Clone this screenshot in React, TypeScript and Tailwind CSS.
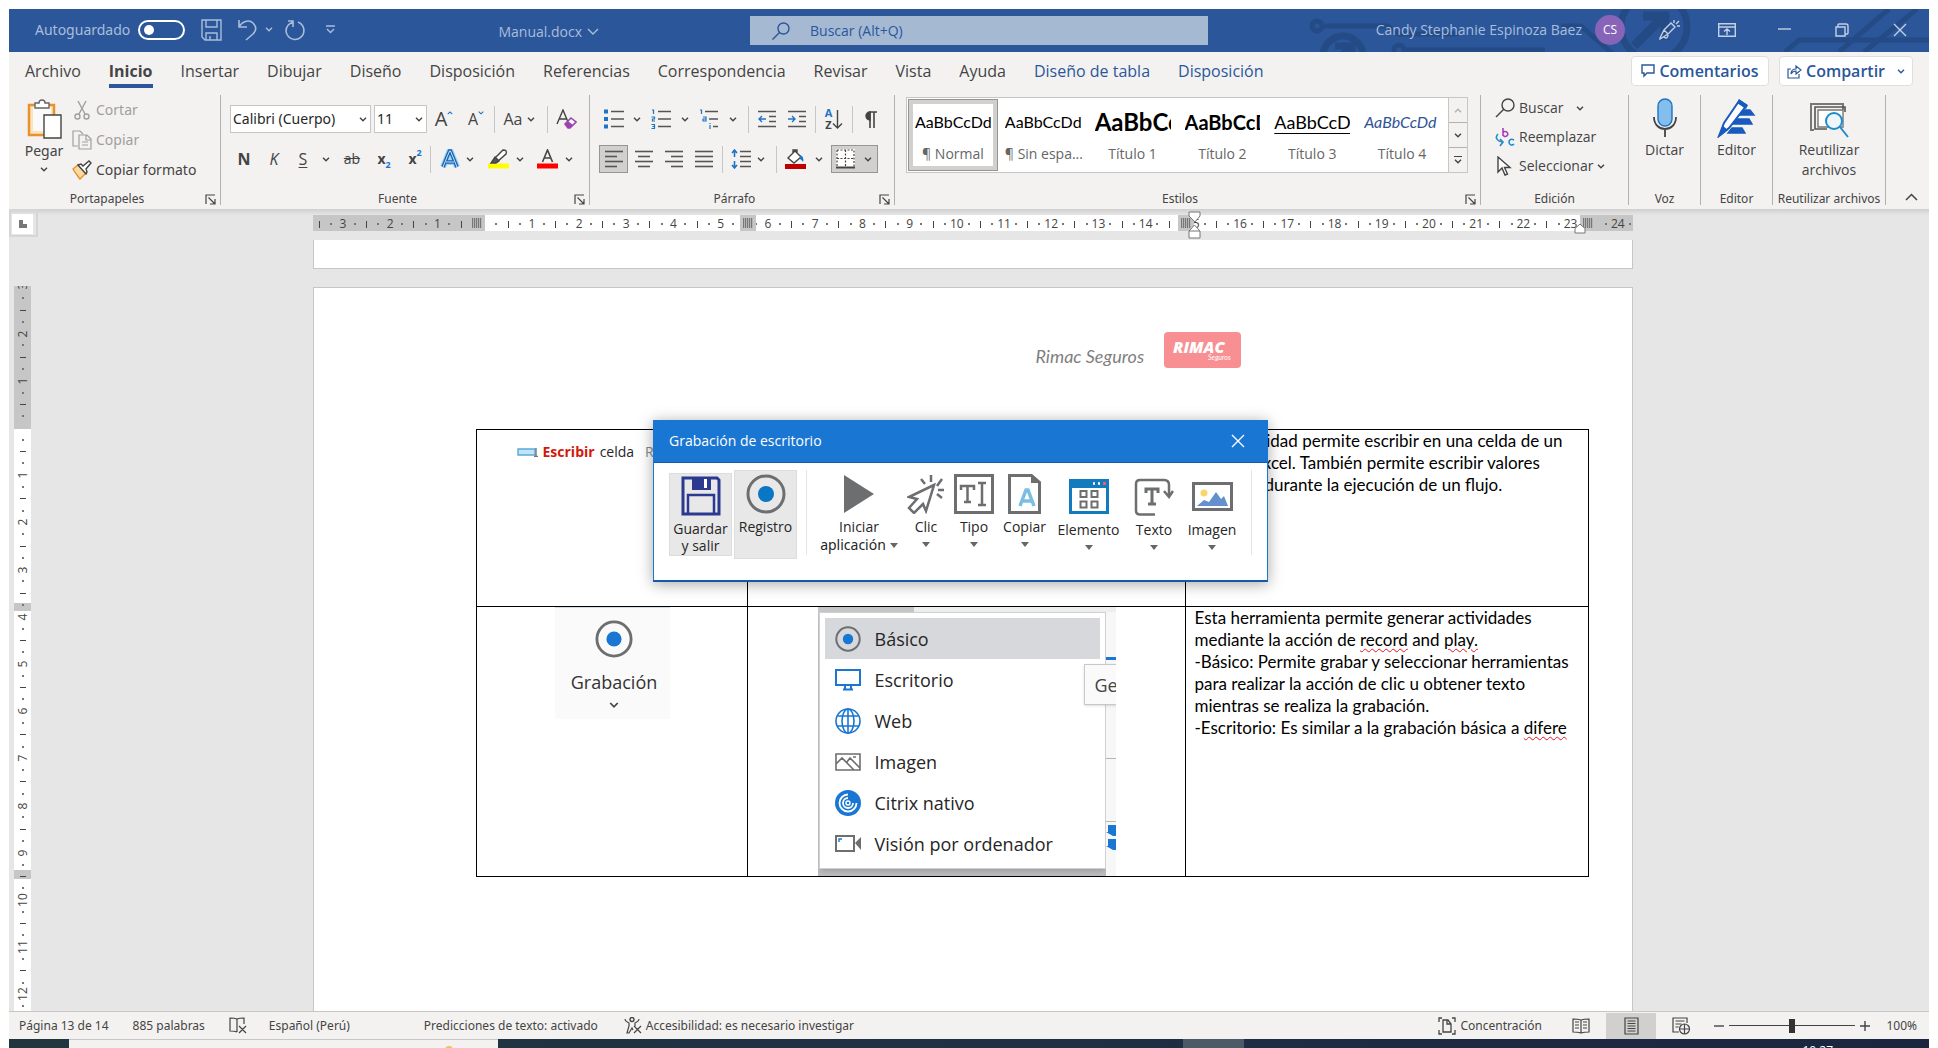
import React from "react";

type Kids = { children?: React.ReactNode };

const Chev = ({ c = "#444444", w = 8 }: { c?: string; w?: number }) => (
  <svg width={w} height={w * 0.625} viewBox="0 0 8 5" fill="none" stroke={c} strokeWidth="1.4" className="shrink-0" aria-hidden="true">
    <path d="M1 .8 4 3.8 7 .8" />
  </svg>
);

const Svg = ({ w = 20, h = 20, vb, children }: Kids & { w?: number; h?: number; vb?: string }) => (
  <svg width={w} height={h} viewBox={vb ?? `0 0 ${w} ${h}`} fill="none" stroke="#444444" strokeWidth="1.4" className="shrink-0" aria-hidden="true">
    {children}
  </svg>
);

const Btn = ({ label, cls = "w-7", children }: Kids & { label: string; cls?: string }) => (
  <button type="button" aria-label={label} className={`flex h-7 shrink-0 items-center justify-center ${cls}`}>
    {children}
  </button>
);

const Drop = ({ label, cls = "w-4" }: { label: string; cls?: string }) => (
  <Btn label={label} cls={cls}>
    <Chev />
  </Btn>
);

const Rule = ({ cls = "mx-1" }: { cls?: string }) => <span className={`h-[27px] w-px shrink-0 bg-[#c8c6c4] ${cls}`} />;

function Group({ name, cls, launcher, children }: Kids & { name: string; cls: string; launcher?: boolean }) {
  return (
    <section aria-label={name} className={`flex h-[110px] flex-col border-r border-[#b3b1af] ${cls}`}>
      <div className="flex-1">{children}</div>
      <div className="flex h-3 items-center">
        <h2 className="flex-1 text-center font-['Noto_Sans',sans-serif] text-xs leading-3 whitespace-nowrap text-[#444444]">{name}</h2>
        {launcher && (
          <button type="button" aria-label={`Opciones de ${name}`} className="mr-1">
            <Svg w={11} h={11}>
              <path d="M1 10V1h9M3.5 3.5l6 6M10 5v5H5" strokeWidth="1.2" />
            </Svg>
          </button>
        )}
      </div>
    </section>
  );
}

/* ---------- Title bar ---------- */

function TitleBar() {
  return (
    <header className="relative grid h-[43px] shrink-0 grid-cols-[741fr_458fr_721fr] items-center overflow-hidden bg-[#2b579a] text-sm text-[#a9bddb]">
      <svg className="absolute top-0 right-0" width="630" height="43" viewBox="0 0 630 43" fill="none" stroke="#254b87" strokeWidth="5" aria-hidden="true">
        <circle cx="18" cy="17" r="5" />
        <path d="M24 17h65l10 8h60" />
        <circle cx="44" cy="47" r="20" strokeWidth="7" />
        <path d="m34 55 18-18M36 37h17v16" strokeWidth="7" />
        <circle cx="100" cy="41" r="5" />
        <path d="M106 41h140M262 17h20l32 28" />
        <circle cx="355" cy="18" r="33" strokeWidth="7" />
        <path d="m335 37 30-30M344 7h22v24" strokeWidth="9" />
        <path d="M486 43 500 31h130M540 43 590 0M565 43 618 0" />
      </svg>
      <div className="relative flex h-full items-center pb-0.5 pl-[26px]">
        <label className="flex items-center gap-2">
          <span className="font-['Noto_Sans',sans-serif]">Autoguardado</span>
          <input
            type="checkbox"
            className="h-5 w-[47px] appearance-none rounded-full border-2 border-white before:mt-[3px] before:ml-1 before:block before:size-[10px] before:rounded-full before:bg-white"
          />
        </label>
        <button type="button" aria-label="Guardar" className="ml-4">
          <Svg w={21} h={22}>
            <path d="M1 1h19v20H4l-3-3zM5 1v7h11V1M5 21v-7h11v7M9 21v-4" stroke="#a9bddb" />
          </Svg>
        </button>
        <button type="button" aria-label="Deshacer" className="ml-4">
          <Svg w={19} h={22}>
            <path d="M1 1v7h8M1 8C5 1 12 1 15 4c4 4 3 8 0 11l-7 6" stroke="#a9bddb" strokeWidth="1.6" />
          </Svg>
        </button>
        <button type="button" aria-label="Opciones de deshacer" className="ml-2">
          <Chev c="#a9bddb" />
        </button>
        <button type="button" aria-label="Rehacer" className="ml-3">
          <Svg w={21} h={22}>
            <path d="M3 2h5v6M8 3C3 5 1 8 1 12a9 9 0 1 0 12-9" stroke="#a9bddb" strokeWidth="1.6" />
          </Svg>
        </button>
        <button type="button" aria-label="Personalizar barra" className="ml-5">
          <Svg w={9} h={9}>
            <path d="M0 1h9M1 4l3.500 3.500L8 4" stroke="#a9bddb" />
          </Svg>
        </button>
        <button type="button" className="mr-[151px] ml-auto flex items-center gap-[5px] pt-1">
          Manual.docx{" "}
          <svg width="12" height="8" viewBox="0 0 12 8" fill="none" stroke="#a9bddb" strokeWidth="1.4" aria-hidden="true">
            <path d="m1 1 5 5 5-5" />
          </svg>
        </button>
      </div>
      <label className="relative flex h-[29px] items-center gap-5 bg-[#a5b9d3] pl-[22px]">
        <Svg w={18} h={18}>
          <circle cx="11.500" cy="6.500" r="5.500" stroke="#2b579a" />
          <path d="m7.500 10.500-7 7" stroke="#2b579a" />
        </Svg>
        <input aria-label="Buscar" placeholder="Buscar (Alt+Q)" className="w-full bg-transparent outline-none placeholder:text-[#2b579a]" />
      </label>
      <div className="relative flex h-full items-center justify-end pr-[22px] pb-0.5">
        <span>Candy Stephanie Espinoza Baez</span>
        <span className="mr-[34px] ml-[13px] flex size-[30px] items-center justify-center rounded-full bg-[#8764b8] text-xs text-white">CS</span>
        <button type="button" aria-label="Novedades">
          <Svg w={21} h={20}>
            <path d="m1 18 4-8 7-7 4 4-7 7-8 5zM5 10l4 4M5 17c2 2 4 1 4-2M15 3V0M17 4l3-3M18 6h3" stroke="#c3d0e5" />
          </Svg>
        </button>
        <button type="button" aria-label="Opciones de la cinta" className="ml-[38px]">
          <Svg w={18} h={14}>
            <path d="M.7.7h16.600v12.600H.7zM.7 4h16.600M9 12V6M6 8.500 9 6l3 2.500" stroke="#c3d0e5" />
          </Svg>
        </button>
        <button type="button" aria-label="Minimizar" className="ml-[42px]">
          <Svg w={13} h={14}>
            <path d="M0 6h13" stroke="#c3d0e5" />
          </Svg>
        </button>
        <button type="button" aria-label="Restaurar" className="ml-11">
          <Svg w={14} h={14}>
            <path d="M1 4h9v9H1zM3 4V2q0-1 1-1h7q2 0 2 2v7q0 1-1 1h-2" stroke="#c3d0e5" />
          </Svg>
        </button>
        <button type="button" aria-label="Cerrar" className="ml-11">
          <Svg w={14} h={14}>
            <path d="m1 1 12 12M13 1 1 13" stroke="#c3d0e5" />
          </Svg>
        </button>
      </div>
    </header>
  );
}

/* ---------- Tabs ---------- */

const TABS = ["Archivo", "Inicio", "Insertar", "Dibujar", "Diseño", "Disposición", "Referencias", "Correspondencia", "Revisar", "Vista", "Ayuda"];

function Tabs() {
  return (
    <nav className="flex h-[43px] shrink-0 items-start pr-4 pl-4 text-base text-[#444444]">
      <div className="flex gap-7">
        {TABS.map((t) => (
          <button
            key={t}
            type="button"
            className={t === "Inicio" ? "h-9 border-b-4 border-[#2b579a] pt-[5px] leading-7 font-bold" : "h-9 border-b-4 border-transparent pt-[5px] leading-7"}
          >
            {t}
          </button>
        ))}
        <button type="button" className="h-9 border-b-4 border-transparent pt-[5px] leading-7 text-[#2b579a]">Diseño de tabla</button>
        <button type="button" className="h-9 border-b-4 border-transparent pt-[5px] leading-7 text-[#2b579a]">Disposición</button>
      </div>
      <div className="mt-1 ml-auto flex gap-[10px] font-semibold text-[#2b579a]">
        <button type="button" className="flex h-[30px] w-[138px] items-center justify-center gap-1 rounded-sm border border-[#e1dfdd] bg-white">
          <Svg w={14} h={14}>
            <path d="M1 1h12v8H6l-3 3V9H1z" stroke="#2b579a" />
          </Svg>
          Comentarios
        </button>
        <button type="button" className="flex h-[30px] w-[134px] items-center justify-center gap-1 rounded-sm border border-[#e1dfdd] bg-white">
          <Svg w={15} h={15}>
            <path d="M4 5H1v9h11v-4M4 10c0-4 3-5 5-5V2l5 4-5 4V7C7 7 5 8 4 10z" stroke="#2b579a" strokeWidth="1.200" />
          </Svg>
          <span className="mr-2">Compartir</span>
          <Chev c="#2b579a" />
        </button>
      </div>
    </nav>
  );
}

/* ---------- Ribbon ---------- */

const Lines = ({ rows }: { rows: number[][] }) => (
  <Svg w={18} h={18}>
    {rows.map(([a, b], i) => (
      <path key={i} d={`M${a} ${i * 5 + 1.5}H${b}`} stroke="#555555" strokeWidth="1.6" />
    ))}
  </Svg>
);

function Clipboard() {
  return (
    <Group name="Portapapeles" cls="w-[212px]" launcher>
      <div className="flex gap-2 pl-[15px] font-['Noto_Sans',sans-serif] text-sm">
        <button type="button" className="flex w-10 flex-col items-center pt-1 text-[#444444]">
          <Svg w={35} h={40}>
            <path d="M2 6h25v30H2z" fill="#fbe3bd" stroke="#e8912d" strokeWidth="2.500" />
            <path d="M6 8h18v24H6z" fill="#fafafa" stroke="none" />
            <path d="M8 4h4c0-4 6-4 6 0h4v5H8z" fill="#fff" stroke="#666" />
            <path d="M17 16h17v23H17z" fill="#fff" />
          </Svg>
          <span className="leading-6">Pegar</span>
          <span className="mt-1"><Chev /></span>
        </button>
        <div className="flex flex-col text-[#a19f9d]">
          <button type="button" className="flex h-[30px] items-center gap-1">
            <Svg w={20} h={20}>
              <path d="m6 1 7 13M14 1 7 14" stroke="#a19f9d" />
              <circle cx="5.500" cy="16.500" r="2.500" stroke="#a19f9d" />
              <circle cx="14.500" cy="16.500" r="2.500" stroke="#a19f9d" />
            </Svg>
            Cortar
          </button>
          <button type="button" className="flex h-[30px] items-center gap-1">
            <Svg w={20} h={20}>
              <path d="M6 16H1V1h7l3 3M7 5h8l4 4v10H7zM14 5v5h5M10 12h6M10 15h6" stroke="#a19f9d" strokeWidth="1.200" />
            </Svg>
            Copiar
          </button>
          <button type="button" className="flex h-[30px] items-center gap-1 text-[#444444]">
            <Svg w={20} h={20}>
              <path d="M1 9 6 5l8 8-6 6C6 16 3 13 1 9z" fill="#fbd9a3" stroke="#e8912d" />
              <path d="m6 5 3-1 2 2 6-5 2 2-5 6 1 3-1 2z" fill="#fff" />
            </Svg>
            Copiar formato
          </button>
        </div>
      </div>
    </Group>
  );
}

function FontGroup() {
  return (
    <Group name="Fuente" cls="w-[369px]" launcher>
      <div className="flex flex-col gap-3 pt-[10px] pl-[9px] text-[#444444]">
        <div className="flex items-center">
          <label className="relative mr-[3px] flex items-center">
            <select aria-label="Fuente" className="h-7 w-[141px] appearance-none border border-[#c8c6c4] bg-white pl-0.5 font-['Noto_Sans',sans-serif] text-sm text-[#262626]">
              <option>Calibri (Cuerpo)</option>
            </select>
            <span className="pointer-events-none absolute right-1"><Chev /></span>
          </label>
          <label className="relative flex items-center">
            <select aria-label="Tamaño de fuente" className="h-7 w-[53px] appearance-none border border-[#c8c6c4] bg-white pl-0.5 font-['Noto_Sans',sans-serif] text-sm text-[#262626]">
              <option>11</option>
            </select>
            <span className="pointer-events-none absolute right-1"><Chev /></span>
          </label>
          <Btn label="Aumentar tamaño" cls="ml-[3px] w-7">
            <span className="text-xl">A</span>
            <span className="mb-3 rotate-180"><Chev c="#1e74c4" w={6} /></span>
          </Btn>
          <Btn label="Disminuir tamaño" cls="ml-1 w-7">
            <span className="text-base">A</span>
            <span className="mb-3"><Chev c="#1e74c4" w={6} /></span>
          </Btn>
          <Rule cls="mx-1" />
          <Btn label="Cambiar mayúsculas" cls="w-10 gap-1">
            <span className="text-base">Aa</span>
            <Chev />
          </Btn>
          <Rule cls="ml-2 mr-1" />
          <Btn label="Borrar formato">
            <Svg w={21} h={20}>
              <path d="M1 15 7 1l5 12M3 10h8" />
              <path d="m9 15 6-6 5 4-6 6h-2z" fill="#fff" stroke="#9b44b0" strokeWidth="1.600" />
              <path d="m9 15 3-3 5 4-3 3h-2z" fill="#9b44b0" stroke="none" />
            </Svg>
          </Btn>
        </div>
        <div className="flex items-center">
          <Btn label="Negrita"><b className="text-base">N</b></Btn>
          <Btn label="Cursiva" cls="w-8"><i className="text-base">K</i></Btn>
          <Btn label="Subrayado" cls="w-[26px]"><u className="text-base underline-offset-2">S</u></Btn>
          <Drop label="Opciones de subrayado" cls="w-5" />
          <Btn label="Tachado" cls="w-8"><s className="text-sm">ab</s></Btn>
          <Btn label="Subíndice" cls="w-8"><b className="text-sm">x</b><b className="mt-3 text-[9px] text-[#1e74c4]">2</b></Btn>
          <Btn label="Superíndice" cls="w-[30px]"><b className="text-sm">x</b><b className="mb-3 text-[9px] text-[#1e74c4]">2</b></Btn>
          <Rule cls="mr-[5px]" />
          <Btn label="Efectos de texto">
            <Svg w={22} h={20}>
              <path d="m4 18 6.500-16h1L18 18M7 13h8" stroke="#9fd0f5" strokeWidth="6" />
              <path d="m4 18 6.500-16h1L18 18M7 13h8" stroke="#1565b5" strokeWidth="3.500" />
              <path d="m4 18 6.500-16h1L18 18M7 13h8" stroke="#fff" strokeWidth=".8" />
            </Svg>
          </Btn>
          <Drop label="Opciones de efectos" cls="w-3" />
          <Btn label="Resaltado" cls="ml-[6px] w-8">
            <Svg w={21} h={20}>
              <path d="M0 14.500h21v5H0z" fill="#ffff00" stroke="none" />
              <path d="m7 9 8-8c3 0 4 1 3 4l-8 7z" fill="#fff" />
              <path d="m7 8 4 4-3 2H3z" fill="#555" />
            </Svg>
          </Btn>
          <Drop label="Colores de resaltado" cls="w-3" />
          <Btn label="Color de fuente" cls="ml-[5px] w-8">
            <Svg w={21} h={20}>
              <path d="M0 14.500h21v5H0z" fill="#ff0000" stroke="none" />
              <path d="m5.500 13 5-12 5 12M7 9h7" strokeWidth="1.600" />
            </Svg>
          </Btn>
          <Drop label="Colores de fuente" cls="w-3" />
        </div>
      </div>
    </Group>
  );
}

function Paragraph() {
  return (
    <Group name="Párrafo" cls="w-[305px]" launcher>
      <div className="flex flex-col gap-3 pt-[10px] pl-[9px]">
        <div className="flex items-center">
          <Btn label="Viñetas" cls="w-[30px]">
            <Svg>
              <path d="M7 2.500h13M7 10h13M7 17.500h13" stroke="#555" />
              <path d="M0 .5h4v4H0zM0 8h4v4H0zM0 15.500h4v4H0z" fill="#1e74c4" stroke="none" />
            </Svg>
          </Btn>
          <Drop label="Opciones de viñetas" />
          <Btn label="Numeración" cls="w-8">
            <Svg>
              <path d="M7 2.500h13M7 10h13M7 17.500h13" stroke="#555" />
              <path d="M1 1h1.500v4M.5 8h3v2h-2v2h2.500M.5 15.500h3v4h-3M1.500 17.500h2" stroke="#1e74c4" strokeWidth="1.200" />
            </Svg>
          </Btn>
          <Drop label="Opciones de numeración" />
          <Btn label="Lista multinivel" cls="w-8">
            <Svg>
              <path d="M6 2.500h13M10 10h9M14 17.500h5" stroke="#555" />
              <path d="M1 1h1.500v4M4 8h3v4H4v-2h3M11 14v1M11 16v4" stroke="#1e74c4" strokeWidth="1.200" />
            </Svg>
          </Btn>
          <Drop label="Opciones de lista" />
          <Rule cls="ml-[7px] mr-[3px]" />
          <Btn label="Disminuir sangría" cls="w-[30px]">
            <Svg w={18} h={18}>
              <path d="M0 1.500h18M11 6.500h7M11 11.500h7M0 16.500h18" stroke="#555" />
              <path d="M8 9H1M4 6 1 9l3 3" stroke="#1e74c4" />
            </Svg>
          </Btn>
          <Btn label="Aumentar sangría" cls="w-[30px]">
            <Svg w={18} h={18}>
              <path d="M0 1.500h18M11 6.500h7M11 11.500h7M0 16.500h18" stroke="#555" />
              <path d="M0 9h7M4 6l3 3-3 3" stroke="#1e74c4" />
            </Svg>
          </Btn>
          <Rule cls="mx-[3px]" />
          <Btn label="Ordenar" cls="w-[30px]">
            <span className="flex flex-col text-[11px] leading-3 font-bold text-[#444444]">
              <span className="text-[#1e74c4]">A</span>
              <span>Z</span>
            </span>
            <Svg w={11} h={20}>
              <path d="M5.500 1v18M1 14.500 5.500 19l4.500-4.500" />
            </Svg>
          </Btn>
          <Rule cls="mx-[3px]" />
          <Btn label="Mostrar todo">
            <Svg w={14} h={17}>
              <path d="M7 1a4 4 0 0 0 0 8z" fill="#444" />
              <path d="M7 17V1h7M11 1v16" strokeWidth="1.600" />
            </Svg>
          </Btn>
        </div>
        <div className="flex items-center">
          <Btn label="Alinear a la izquierda" cls="w-[29px] border border-[#979593] bg-[#d2d0ce]"><Lines rows={[[0, 18], [0, 12], [0, 18], [0, 12]]} /></Btn>
          <Btn label="Centrar" cls="w-[31px]"><Lines rows={[[0, 18], [3, 15], [0, 18], [3, 15]]} /></Btn>
          <Btn label="Alinear a la derecha" cls="w-[30px]"><Lines rows={[[0, 18], [6, 18], [0, 18], [6, 18]]} /></Btn>
          <Btn label="Justificar" cls="w-[30px]"><Lines rows={[[0, 18], [0, 18], [0, 18], [0, 18]]} /></Btn>
          <Rule cls="ml-[3px] mr-1" />
          <Btn label="Interlineado">
            <Svg>
              <path d="M9 2.500h11M9 7.500h11M9 12.500h11M9 17.500h11" stroke="#555" />
              <path d="M3.500 1v7M1 4l2.500-3L6 4M3.500 19v-7M1 16l2.500 3L6 16" stroke="#1e74c4" strokeWidth="1.600" />
            </Svg>
          </Btn>
          <Drop label="Opciones de interlineado" cls="w-3" />
          <Rule cls="ml-[9px] mr-1" />
          <Btn label="Sombreado">
            <Svg w={21} h={20}>
              <path d="M0 15h21v5H0z" fill="#c00000" stroke="none" />
              <path d="m3 9 7-7 6 6-7 6zM8 4V1h4v4" fill="#fff" />
              <path d="M15 6c3 1 4 4 3 7-1-2-2-2-3-3z" fill="#1e74c4" stroke="none" />
            </Svg>
          </Btn>
          <Drop label="Colores de sombreado" cls="w-5" />
          <span className="ml-0.5 flex border border-[#979593] bg-[#d2d0ce]">
            <Btn label="Bordes" cls="-my-px w-[27px]">
              <Svg w={19} h={20}>
                <path d="M0 0h19v18H0z" fill="#fff" stroke="none" />
                <path d="M1 1h17v17M1 1v17M9.500 1v17M1 9.500h17" strokeDasharray="2 1.500" strokeWidth="1.200" />
                <path d="M0 18.500h19" strokeWidth="2" />
              </Svg>
            </Btn>
            <Btn label="Opciones de bordes" cls="-my-px w-[18px]"><Chev /></Btn>
          </span>
        </div>
      </div>
    </Group>
  );
}

const STYLES = [
  { n: "¶ Normal", s: "AaBbCcDd", c: "text-base text-black" },
  { n: "¶ Sin espa...", s: "AaBbCcDd", c: "text-base text-black" },
  { n: "Título 1", s: "AaBbCcDd", c: "text-2xl font-bold text-black" },
  { n: "Título 2", s: "AaBbCcDd", c: "text-xl font-bold text-black" },
  { n: "Título 3", s: "AaBbCcD", c: "text-lg text-black underline underline-offset-4" },
  { n: "Título 4", s: "AaBbCcDd", c: "text-base italic text-[#2f5496]" },
];

function Styles() {
  return (
    <Group name="Estilos" cls="min-w-0 flex-1" launcher>
      <div className="mt-0.5 mr-3 ml-[11px] flex h-[76px] border border-[#c8c6c4] bg-white">
        <div className="grid min-w-0 flex-1 grid-cols-6 p-px">
          {STYLES.map((s, i) => (
            <button
              key={s.n}
              type="button"
              className={i === 0 ? "min-w-0 border border-[#979593] bg-white px-[6px] ring-4 ring-[#d2d0ce] ring-inset" : "min-w-0 border border-transparent px-[6px]"}
            >
              <span className={`block h-8 overflow-hidden text-left font-[Lato,sans-serif] leading-8 whitespace-nowrap ${s.c}`}>{s.s}</span>
              <span className="block pt-1.5 text-sm whitespace-nowrap text-[#666666]">{s.n}</span>
            </button>
          ))}
        </div>
        <div className="flex w-[19px] flex-col divide-y divide-[#b3b1af] border-l border-[#c8c6c4] bg-[#f3f2f1]">
          <button type="button" aria-label="Estilos anteriores" className="flex flex-1 items-center justify-center">
            <span className="rotate-180"><Chev c="#b3b1af" /></span>
          </button>
          <button type="button" aria-label="Estilos siguientes" className="flex flex-1 items-center justify-center"><Chev /></button>
          <button type="button" aria-label="Más estilos" className="flex flex-1 flex-col items-center justify-center gap-0.5">
            <span className="h-px w-2 bg-[#444444]" />
            <Chev />
          </button>
        </div>
      </div>
    </Group>
  );
}

function RightGroups() {
  return (
    <>
      <Group name="Edición" cls="w-[148px] shrink-0">
        <div className="flex flex-col pl-[14px] text-sm text-[#444444]">
          <button type="button" className="flex h-[26px] items-center gap-1">
            <Svg><circle cx="13" cy="7" r="6" /><path d="m9 11-8 8" /></Svg>
            Buscar <span className="ml-2"><Chev /></span>
          </button>
          <button type="button" className="flex h-8 items-center gap-1">
            <Svg>
              <path d="M8 1v8M8 6a2.500 2.500 0 1 1 0 2" stroke="#a83fb8" strokeWidth="1.600" />
              <path d="M19 13c-4-2-5 1-5 2 0 3 3 4 5 2M3 7c-3 3-2 7 5 8M5 12l3 3-3 4" stroke="#1e8bcd" strokeWidth="1.600" />
            </Svg>
            Reemplazar
          </button>
          <button type="button" className="flex h-[26px] items-center gap-1">
            <Svg><path d="M3 1v15l4-4 3 7 2.500-1-3-6.500H15z" fill="#fff" /></Svg>
            Seleccionar <Chev />
          </button>
        </div>
      </Group>
      <Group name="Voz" cls="w-[72px] shrink-0">
        <button type="button" className="flex w-full flex-col items-center pt-[3px] text-sm text-[#444444]">
          <Svg w={26} h={40}>
            <rect x="6" y="1" width="14" height="27" rx="7" fill="#83beec" stroke="#1e74c4" />
            <path d="M2 19c0 16 22 16 22 0M13 31v8" strokeWidth="1.800" />
          </Svg>
          <span className="leading-6">Dictar</span>
        </button>
      </Group>
      <Group name="Editor" cls="w-[72px] shrink-0">
        <button type="button" className="flex w-full flex-col items-center pt-[3px] text-sm text-[#444444]">
          <Svg w={40} h={40}>
            <path d="M22 12h11l4 5H20zM20 21h12l3 5H16zM15 30h10l3 5H11z" fill="#185abd" stroke="#185abd" />
            <path d="M22 3 7 25 2 38l10-8L29 8z" fill="#fff" stroke="#185abd" strokeWidth="2" />
            <path d="m22 1 9 6-2 4-9-6zM6 28l5 4-9 7z" fill="#185abd" stroke="none" />
          </Svg>
          <span className="leading-6">Editor</span>
        </button>
      </Group>
      <Group name="Reutilizar archivos" cls="w-[113px] shrink-0">
        <button type="button" className="flex w-full flex-col items-center pt-[3px] text-sm text-[#444444]">
          <Svg w={40} h={40}>
            <path d="M34 12V6H2v26h3" stroke="#777" strokeWidth="2" />
            <path d="M36 14V9H6v22h12" stroke="#555" strokeWidth="1.600" />
            <path d="M9 12h25v17H9z" fill="#fff" stroke="#777" />
            <circle cx="25" cy="23" r="8" fill="#eef6fc" stroke="#1e8bcd" strokeWidth="2" />
            <path d="m31 29 8 10" stroke="#1e8bcd" strokeWidth="2" />
          </Svg>
          <span className="leading-6">Reutilizar</span>
          <span className="leading-4">archivos</span>
        </button>
      </Group>
      <button type="button" aria-label="Contraer la cinta" className="flex h-[110px] w-[43px] shrink-0 items-end justify-center pr-0 pb-1 pl-2">
        <svg width="13" height="8" viewBox="0 0 13 8" fill="none" stroke="#444444" strokeWidth="1.5" aria-hidden="true">
          <path d="m1 7 5.500-5.500L12 7" />
        </svg>
      </button>
    </>
  );
}

/* ---------- Rulers ---------- */

const H_MARKS = Array.from({ length: 28 }, (_, i) => Math.abs(i - 3));
const V_MARKS = Array.from({ length: 16 }, (_, i) => Math.abs(i - 3));

const Grip = ({ cls }: { cls: string }) => (
  <span className={`absolute inset-y-0 w-4 bg-[#c6c6c6] px-[3px] py-[3px] ${cls}`}>
    <span className="block h-full w-full bg-[repeating-linear-gradient(90deg,#777_0_1px,#b5b5b5_1px_2px)]" />
  </span>
);

function HorizontalRuler() {
  return (
    <div className="relative mx-auto mt-[6px] h-4 w-[1320px] bg-white text-xs leading-4 text-[#444444]">
      <div className="absolute inset-0 overflow-hidden">
        <span className="absolute inset-y-0 left-0 w-[172px] bg-[#c6c6c6]" />
        <span className="absolute inset-y-0 right-0 w-[50px] bg-[#c6c6c6]" />
        <div className="relative -mr-[3px] ml-px grid grid-cols-28 pt-px">
          {H_MARKS.map((n, i) => (
            <span key={i} className="grid grid-cols-4 items-center justify-items-center">
              <span className="h-[7px] w-px bg-[#444444]" />
              <span className="size-[2px] bg-[#777777]" />
              <span className="flex w-4 justify-center">{n || ""}</span>
              <span className="size-[2px] bg-[#777777]" />
            </span>
          ))}
        </div>
        <Grip cls="left-[156px]" />
        <Grip cls="left-[427px]" />
        <Grip cls="left-[865px]" />
        <Grip cls="left-[1267px]" />
      </div>
      <svg className="absolute -top-1 left-[875px]" width="13" height="28" viewBox="0 0 13 28" fill="#fff" stroke="#777" aria-hidden="true">
        <path d="M1 1h11v4l-5 6-6-6zM1 20l5.500-6L12 20v7H1zM1 20h11" />
      </svg>
      <svg className="absolute top-2 left-[1261px]" width="12" height="11" viewBox="0 0 12 11" fill="#fff" stroke="#777" aria-hidden="true">
        <path d="M1 5.500 6 1l5 4.500V10H1z" />
      </svg>
    </div>
  );
}

function VerticalRuler() {
  return (
    <div className="relative mt-[49px] ml-[5px] min-h-0 w-[17px] flex-1 overflow-hidden bg-white text-xs text-[#444444]">
      <span className="absolute top-0 left-0 h-[143px] w-full bg-[#c6c6c6]" />
      <span className="absolute top-[317px] left-0 h-2 w-full bg-[#c6c6c6]" />
      <span className="absolute top-[584px] left-0 h-[9px] w-full bg-[#c6c6c6]" />
      <div className="relative -mt-[29px] grid h-[755px] grid-rows-16">
        {V_MARKS.map((n, i) => (
          <span key={i} className="grid grid-rows-4 items-center justify-items-center">
            <span className="h-px w-[6px] bg-[#444444]" />
            <span className="size-[2px] bg-[#777777]" />
            <span className="flex h-2 w-4 -rotate-90 items-center justify-center leading-3">{n || ""}</span>
            <span className="size-[2px] bg-[#777777]" />
          </span>
        ))}
      </div>
    </div>
  );
}

/* ---------- Document ---------- */

const Record = ({ s, dot = "#1976d2" }: { s: number; dot?: string }) => (
  <Svg w={s} h={s} vb="0 0 40 40">
    <circle cx="20" cy="20" r="18" stroke="#6d6e70" strokeWidth="3" />
    <circle cx="20" cy="20" r="8" fill={dot} stroke="none" />
  </Svg>
);

const MENU: { n: string; i: React.ReactNode }[] = [
  { n: "Básico", i: <Record s={26} /> },
  {
    n: "Escritorio",
    i: <Svg w={26} h={22}><path d="M1 1h24v15H1zM10 17v3M16 17v3M8 20.500h10" stroke="#1976d2" strokeWidth="2" /></Svg>,
  },
  {
    n: "Web",
    i: <Svg w={26} h={26}><g stroke="#1976d2" strokeWidth="1.600"><circle cx="13" cy="13" r="12" /><ellipse cx="13" cy="13" rx="6" ry="12" /><path d="M13 1v24M2.500 8h21M2.500 18h21" /></g></Svg>,
  },
  {
    n: "Imagen",
    i: <Svg w={26} h={18}><path d="M1 1h24v16H1zM1 11l6-6 12 12M12 9l3-4 10 10M18 4h3" stroke="#6d6e70" strokeWidth="1.600" /></Svg>,
  },
  {
    n: "Citrix nativo",
    i: (
      <Svg w={26} h={26}>
        <circle cx="13" cy="13" r="13" fill="#1976d2" stroke="none" />
        <circle cx="13" cy="13" r="2" stroke="#fff" />
        <path d="M13 8a5 5 0 1 0 5 5M13 4.500a8.500 8.500 0 1 0 8.500 8.500" stroke="#fff" strokeWidth="1.800" />
      </Svg>
    ),
  },
  {
    n: "Visión por ordenador",
    i: <Svg w={26} h={17}><path d="M1 1h18v15H1z" stroke="#6d6e70" strokeWidth="2" /><path d="m20 8 6-6v13z" fill="#6d6e70" stroke="none" /><path d="M4 7V4h3" stroke="#1976d2" /></Svg>,
  },
];

const Typo = ({ children }: Kids) => (
  <span className="underline decoration-[#e81123] decoration-wavy decoration-1 underline-offset-2">{children}</span>
);

function RecordingMenu() {
  return (
    <div className="relative ml-[70px] flex h-[269px] w-[298px] overflow-hidden bg-[#c6c6c8] pt-[5px] pl-px">
      <span className="absolute top-0 right-0 h-full w-[202px] bg-[#eeeeee]" />
      <span className="absolute right-0 bottom-0 left-0 h-2 bg-[#bdbdbf]" />
      <div className="relative h-[257px] w-[287px] border border-[#d0d0d0] bg-white px-[5px] pt-[5px] shadow-md">
        {MENU.map((m, i) => (
          <button
            key={m.n}
            type="button"
            className={i === 0 ? "flex h-[41px] w-full items-center gap-[14px] bg-[#d7d8dc] pl-[10px] text-left" : "flex h-[41px] w-full items-center gap-[14px] pl-[10px] text-left"}
          >
            <span className="flex w-[26px] justify-center">{m.i}</span>
            <span className="text-lg text-[#262626]">{m.n}</span>
          </button>
        ))}
      </div>
      <div className="relative h-[264px] w-[10px] bg-[#f7f7f8]">
        <span className="absolute top-[45px] left-0 h-[3px] w-full bg-[#1976d2]" />
        <span className="absolute top-[146px] left-0 h-px w-full bg-[#b5b5b5]" />
        <span className="absolute top-[209px] left-0 h-px w-full bg-[#b5b5b5]" />
        <svg className="absolute top-[213px] left-0" width="10" height="26" viewBox="0 0 10 26" fill="#1976d2" aria-hidden="true">
          <path d="M2 0h8v11H7L0 7h2zM2 14h8v11H7l-7-4h2z" />
        </svg>
      </div>
      <span className="absolute top-[57px] left-[266px] flex h-[41px] w-11 items-center border border-[#c8c8c8] bg-[#fafafa] pl-[10px] text-lg text-[#444444] shadow">Ge</span>
    </div>
  );
}

function Document() {
  return (
    <div className="mx-auto mt-[9px] flex w-[1320px] flex-1 flex-col">
      <div className="h-[29px] shrink-0 border border-t-0 border-[#c6c6c6] bg-white" />
      <article className="mt-[18px] flex-1 border border-b-0 border-[#c6c6c6] bg-white pl-[162px]">
        <div className="flex h-[141px] pt-11 pl-[560px]">
          <span className="pt-3 font-[Lato,sans-serif] text-lg leading-6 text-[#7f7f7f] italic">Rimac Seguros</span>
          <svg className="mr-[391px] ml-auto" width="77" height="36" viewBox="0 0 77 36" role="img" aria-label="RIMAC Seguros">
            <rect width="77" height="36" rx="4" fill="#f88f92" />
            <text x="9" y="21" fontFamily="Open Sans" fontWeight="800" fontStyle="italic" fontSize="16" fill="#fff">RIMAC</text>
            <text x="44" y="28" fontFamily="Lato" fontStyle="italic" fontSize="7" fill="#fff">Seguros</text>
          </svg>
        </div>
        <table className="w-[1112px] table-fixed border-collapse font-[Lato,sans-serif] text-[17px] leading-[22px] text-black [&_td]:border [&_td]:border-black [&_td]:align-top">
          <colgroup>
            <col className="w-[271px]" />
            <col className="w-[438px]" />
            <col className="w-[403px]" />
          </colgroup>
          <tbody>
            <tr className="h-[177px]">
              <td>
                <div className="flex items-center gap-[5px] pt-[11px] pl-10 font-['Open_Sans',sans-serif] text-sm leading-[22px] whitespace-nowrap text-[#262626]">
                  <Svg w={21} h={9}>
                    <path d="M1 1h17v6H1z" fill="#bfe4f5" stroke="#5aa9dc" />
                    <path d="M19 0v9M17 8.500h4" stroke="#777" />
                  </Svg>
                  <b className="font-bold text-[#d3180c]">Escribir</b>
                  <span>celda</span>
                  <span className="ml-1.5 text-[#8a8a8a]">R</span>
                </div>
              </td>
              <td />
              <td className="pl-[9px] whitespace-nowrap">
                Esta actividad permite escribir en una celda de un
                <br />
                archivo Excel. También permite escribir valores
                <br />
                variables durante la ejecución de un flujo.
              </td>
            </tr>
            <tr className="h-[270px]">
              <td>
                <div className="ml-[78px] flex h-28 w-[115px] flex-col items-center border-t border-[#cfdcea] bg-[#fafafa] pt-3 pl-1 font-['Open_Sans',sans-serif]">
                  <Record s={38} />
                  <span className="mt-3 mb-2 text-lg leading-6 text-[#333333]">Grabación</span>
                  <Chev w={10} />
                </div>
              </td>
              <td className="font-['Open_Sans',sans-serif]">
                <RecordingMenu />
              </td>
              <td className="pl-[9px] whitespace-nowrap">
                Esta herramienta permite generar actividades
                <br />
                mediante la acción de <Typo>record</Typo> and <Typo>play.</Typo>
                <br />
                -Básico: Permite grabar y seleccionar herramientas
                <br />
                para realizar la acción de clic u obtener texto
                <br />
                mientras se realiza la grabación.
                <br />
                -Escritorio: Es similar a la grabación básica a <Typo>difere</Typo>
              </td>
            </tr>
          </tbody>
        </table>
      </article>
    </div>
  );
}

/* ---------- Recording dialog ---------- */

const TOOLS: { n: string; w: string; i: React.ReactNode; low?: boolean }[] = [
  {
    n: "Clic",
    w: "w-[42px]",
    i: (
      <Svg w={38} h={40}>
        <g stroke="#6d6e70" strokeWidth="2.500">
          <path d="M27 11 2 23l8 2-8 9 5 5 9-9 3 7z" />
          <path d="M24 8V1M18 10l-4-5M30 12l5-7M31 16h6M30 20l5 4" />
        </g>
      </Svg>
    ),
  },
  {
    n: "Tipo",
    w: "w-[54px]",
    i: (
      <Svg w={40} h={40}>
        <g stroke="#6d6e70" strokeWidth="3">
          <path d="M1.500 1.500h37v37h-37z" />
          <path d="M7 16v-4h13v4M13.500 12v16M10 28h7M24 9h8M28 9v22M24 31h8" strokeWidth="2.500" />
        </g>
      </Svg>
    ),
  },
  {
    n: "Copiar",
    w: "w-[47px]",
    i: (
      <Svg w={33} h={40}>
        <path d="M1.500 1.500h22l8 7v30h-30z" stroke="#6d6e70" strokeWidth="3" />
        <path d="M23 1v8h9z" fill="#6d6e70" stroke="none" />
        <path d="m12 32 6-16h2l6 16M14 27h10" stroke="#7dbde4" strokeWidth="3.500" />
      </Svg>
    ),
  },
  {
    n: "Elemento",
    w: "w-[81px]",
    low: true,
    i: (
      <Svg w={40} h={35}>
        <path d="M1.500 1.500h37v32h-37z" fill="#fff" stroke="#127bbd" strokeWidth="3" />
        <path d="M0 0h40v9H0z" fill="#127bbd" stroke="none" />
        <path d="M24 4.500h2M29 4.500h2" stroke="#fff" strokeWidth="2.500" />
        <path d="M34 4.500h3" stroke="#f25c6e" strokeWidth="3" />
        <path d="M11.500 12h6v6h-6zM22.500 12h6v6h-6zM11.500 22.500h6v6h-6zM22.500 22.500h6v6h-6z" stroke="#6d6e70" strokeWidth="2" />
      </Svg>
    ),
  },
  {
    n: "Texto",
    w: "w-[50px]",
    low: true,
    i: (
      <Svg w={40} h={38}>
        <g stroke="#6d6e70" strokeWidth="2.500">
          <path d="M21 36.500H6q-4 0-4-4V6q0-4 4-4h24q5 0 5 5v11M30 13l5 6 4-6" />
          <path d="M12 15v-4h12v4M18 11v15M14 26h8" strokeWidth="3" />
        </g>
      </Svg>
    ),
  },
  {
    n: "Imagen",
    w: "w-[66px]",
    low: true,
    i: (
      <Svg w={41} h={29}>
        <path d="M1.500 1.500h38v26h-38z" stroke="#6d6e70" strokeWidth="3" />
        <circle cx="12" cy="11" r="3.500" fill="#f5d76e" stroke="none" />
        <path d="m5 24 7-6 5 2 7-10 5 7 3-3 4 10z" fill="#6490cd" stroke="none" />
      </Svg>
    ),
  },
];

const Caret = () => (
  <svg width="8" height="5" viewBox="0 0 8 5" fill="#666" className="shrink-0" aria-hidden="true">
    <path d="M0 0h8L4 5z" />
  </svg>
);

function Dialog() {
  return (
    <section
      role="dialog"
      aria-label="Grabación de escritorio"
      className="absolute top-[420px] left-[653px] h-[162px] w-[615px] border border-[#1976d2] border-b-2 border-b-[#155aa5] bg-white text-sm text-[#262626] shadow-[0_2px_14px_rgba(0,0,0,0.35)]"
    >
      <div className="flex h-[42px] items-center justify-between border-b border-[#155aa5] bg-[#1976d2] pr-[22px] pb-0.5 pl-[15px] text-white">
        <h1 className="text-sm">Grabación de escritorio</h1>
        <button type="button" aria-label="Cerrar">
          <Svg w={14} h={14}><path d="m1 1 12 12M13 1 1 13" stroke="#fff" /></Svg>
        </button>
      </div>
      <div className="flex pl-[15px]">
        <button type="button" className="mt-[10px] mr-0.5 flex h-[83px] w-[63px] flex-col items-center border border-[#dddddd] bg-[#e8e8e8] pt-0.5">
          <Svg w={40} h={40}>
            <path d="M2 2h34l2 2v34H2z" stroke="#2b3990" strokeWidth="3" />
            <path d="M11 1h19v13H11z" fill="#2b3990" stroke="none" />
            <path d="M24.500 3v9" stroke="#fff" strokeWidth="3" />
            <path d="M7 38V19h26v19" stroke="#2b3990" strokeWidth="2.500" />
          </Svg>
          <span className="pt-1 leading-[17px]">Guardar<br />y salir</span>
        </button>
        <button type="button" className="mt-[7px] flex h-[89px] w-[63px] flex-col items-center border border-[#dddddd] bg-[#e8e8e8] pt-[3px]">
          <Record s={40} dot="#0a76c4" />
          <span className="pt-1 leading-[18px]">Registro</span>
        </button>
        <span className="mt-[7px] mr-[6px] ml-[9px] h-[85px] w-px bg-[#e5e5e5]" />
        <button type="button" className="mt-[7px] flex w-[92px] flex-col items-center pt-1 leading-[18px]">
          <Svg w={30} h={40}><path d="M0 1 30 20 0 39z" fill="#6d6e70" stroke="none" /></Svg>
          <span className="pt-1">Iniciar</span>
          <span className="flex items-center gap-1 font-['Noto_Sans',sans-serif]">aplicación <Caret /></span>
        </button>
        {TOOLS.map((t) => (
          <button key={t.n} type="button" className={`mt-[11px] flex flex-col items-center leading-[18px] ${t.w}`}>
            <span className={t.low ? "flex h-[43px] items-center pt-0.5" : "flex h-10 items-center"}>{t.i}</span>
            <span className="pt-1 pb-1.5">{t.n}</span>
            <Caret />
          </button>
        ))}
        <span className="mt-[7px] ml-[6px] h-[85px] w-px bg-[#e5e5e5]" />
      </div>
    </section>
  );
}

/* ---------- Status bar ---------- */

function StatusBar() {
  return (
    <footer className="flex h-7 shrink-0 items-center border-t border-[#c6c6c6] bg-[#f3f2f1] pr-3 pl-[10px] font-['Noto_Sans',sans-serif] text-xs whitespace-nowrap text-[#444444]">
      <span>Página 13 de 14</span>
      <span className="ml-6">885 palabras</span>
      <button type="button" aria-label="Revisión" className="ml-6">
        <Svg w={18} h={17}><path d="M8 2v13M8 2C6 1 4 1 1 1v13c3 0 5 0 7 1M8 2c2-1 4-1 7-1v6M10 9l7 7M17 9l-7 7" strokeWidth="1.200" /></Svg>
      </button>
      <span className="ml-[22px]">Español (Perú)</span>
      <span className="ml-[74px]">Predicciones de texto: activado</span>
      <button type="button" className="ml-[26px] flex items-center gap-1">
        <Svg w={18} h={17}><circle cx="8" cy="2.500" r="2" /><path d="M1 2c0 3 3 3 4 4v3l-2 7h2l3-5 1 2M15 2c0 3-3 3-4 4v3M10 9l7 7M17 9l-7 7" strokeWidth="1.200" /></Svg>
        Accesibilidad: es necesario investigar
      </button>
      <button type="button" className="mr-[14px] ml-auto flex items-center gap-1">
        <Svg w={18} h={18}><path d="M4 1H1v4M1 13v4h3M14 1h3v4M17 13v4h-3M5 3h5l3 4v8H5zM9 3v4h4" strokeWidth="1.300" /></Svg>
        Concentración
      </button>
      <button type="button" aria-label="Modo lectura" className="flex h-[26px] w-[50px] items-center justify-center">
        <Svg w={18} h={16}><path d="M9 2v13M9 2C6 1 4 1 1 1v13c3 0 5 0 8 1 3-1 5-1 8-1V1c-3 0-5 0-8 1M3 4h4M3 7h4M3 10h4M11 4h4M11 7h4M11 10h4" strokeWidth="1.200" /></Svg>
      </button>
      <button type="button" aria-label="Diseño de impresión" className="flex h-[26px] w-[50px] items-center justify-center bg-[#d2d0ce]">
        <Svg w={15} h={18}><path d="M1 1h13v16H1zM3.500 4h8M3.500 6.500h8M3.500 9h8M3.500 11.500h8M3.500 14h8" strokeWidth="1.200" /></Svg>
      </button>
      <button type="button" aria-label="Diseño web" className="flex h-[26px] w-[50px] items-center justify-center">
        <Svg w={18} h={18}><path d="M7 15H1V1h14v5M3.500 4h9M3.500 7h6M3.500 10h3" strokeWidth="1.200" /><circle cx="12.500" cy="12" r="5" strokeWidth="1.200" /><path d="M12.500 7v10M7.500 12h10" strokeWidth="1.200" /></Svg>
      </button>
      <button type="button" aria-label="Alejar" className="ml-2 flex w-[10px] justify-center"><Svg w={10} h={10}><path d="M0 5h10" /></Svg></button>
      <input
        type="range"
        aria-label="Zoom"
        defaultValue={50}
        className="mx-[5px] h-4 w-[126px] appearance-none bg-[linear-gradient(#444,#444)] bg-[length:100%_1px] bg-center bg-no-repeat [&::-webkit-slider-thumb]:h-[14px] [&::-webkit-slider-thumb]:w-[6px] [&::-webkit-slider-thumb]:appearance-none [&::-webkit-slider-thumb]:bg-[#333333]"
      />
      <button type="button" aria-label="Acercar"><Svg w={10} h={10}><path d="M0 5h10M5 0v10" /></Svg></button>
      <span className="w-[47px] text-right">100%</span>
    </footer>
  );
}

export default function App() {
  return (
    <div className="relative flex h-screen flex-col overflow-hidden bg-white px-[9px] pt-[9px] font-['Open_Sans',sans-serif]">
      <TitleBar />
      <div className="shrink-0 bg-[#f3f2f1]">
        <Tabs />
        <div className="flex h-[114px]">
          <Clipboard />
          <FontGroup />
          <Paragraph />
          <Styles />
          <RightGroups />
        </div>
      </div>
      <main className="flex min-h-0 flex-1 bg-[#e6e6e6] bg-[linear-gradient(#cfcfcf,#e6e6e6)] bg-[length:100%_6px] bg-no-repeat">
        <div className="flex w-[29px] shrink-0 flex-col">
          <div className="h-7 border-2 border-[#d6d6d6] pt-[3px] pl-px">
            <button type="button" aria-label="Tabulación" className="flex h-5 w-[21px] items-center justify-center bg-white">
              <span className="size-2 border-b-4 border-l-4 border-[#777777]" />
            </button>
          </div>
          <VerticalRuler />
        </div>
        <div className="flex min-w-0 flex-1 flex-col overflow-hidden pr-[22px]">
          <HorizontalRuler />
          <Document />
        </div>
      </main>
      <StatusBar />
      <div className="flex h-[9px] shrink-0 overflow-hidden bg-[linear-gradient(90deg,#20363f,#1f3044_50%,#1b2540)]">
        <div className="ml-[60px] flex w-[429px] justify-center border-t border-[#c6c6c6] bg-[#f3f2f1] pl-[330px]">
          <span className="mt-[6px] h-1 w-2 rounded-t-full bg-[#f3c04b]" />
        </div>
        <span className="ml-[685px] w-[61px] bg-[#4c5966]" />
        <span className="mr-[96px] ml-auto pt-1 text-xs text-white">10:27</span>
      </div>
      <Dialog />
    </div>
  );
}
